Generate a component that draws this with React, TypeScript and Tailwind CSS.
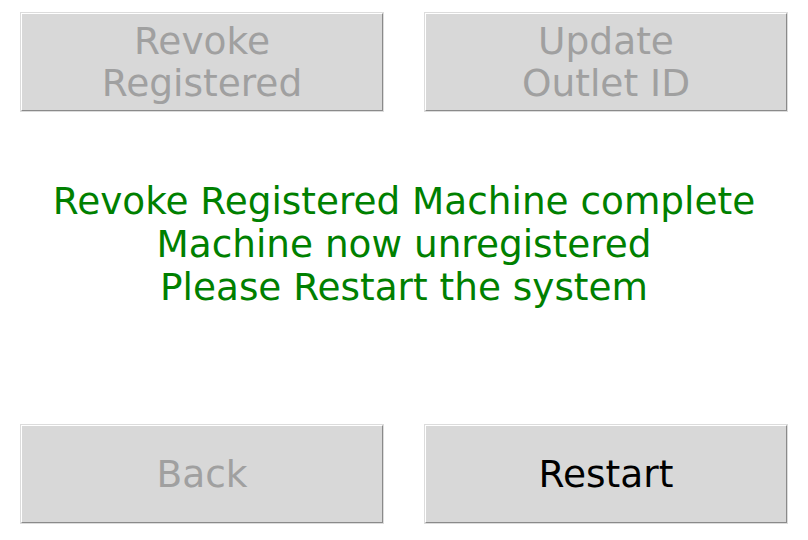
const font = { fontFamily: '"DejaVu Sans", sans-serif' }

function Btn({ lines, enabled = false }: { lines: string[]; enabled?: boolean }) {
  return (
    <div className="h-[100px] w-[364px] border border-[#dcdcdc]">
      <div className="flex h-full w-full flex-col items-center justify-center border-t border-l border-b border-r border-t-white border-l-white border-b-[#8a8a8a] border-r-[#8a8a8a] bg-[#d8d8d8]">
        {lines.map((l) => (
          <div
            key={l}
            className={`text-[37.5px] leading-[42px] ${enabled ? 'text-black' : 'text-[#a0a0a0]'}`}
          >
            {l}
          </div>
        ))}
      </div>
    </div>
  )
}

export default function App() {
  return (
    <div className="flex h-[540px] w-[808px] flex-col bg-white px-5 pt-3" style={font}>
      <div className="flex justify-between">
        <Btn lines={['Revoke', 'Registered']} />
        <Btn lines={['Update', 'Outlet ID']} />
      </div>
      <div className="flex h-[312px] flex-col items-center pt-[68px] text-[37.4px] leading-[43px] text-[#008000]">
        <div>Revoke Registered Machine complete</div>
        <div>Machine now unregistered</div>
        <div>Please Restart the system</div>
      </div>
      <div className="flex justify-between">
        <Btn lines={['Back']} />
        <Btn lines={['Restart']} enabled />
      </div>
    </div>
  )
}
